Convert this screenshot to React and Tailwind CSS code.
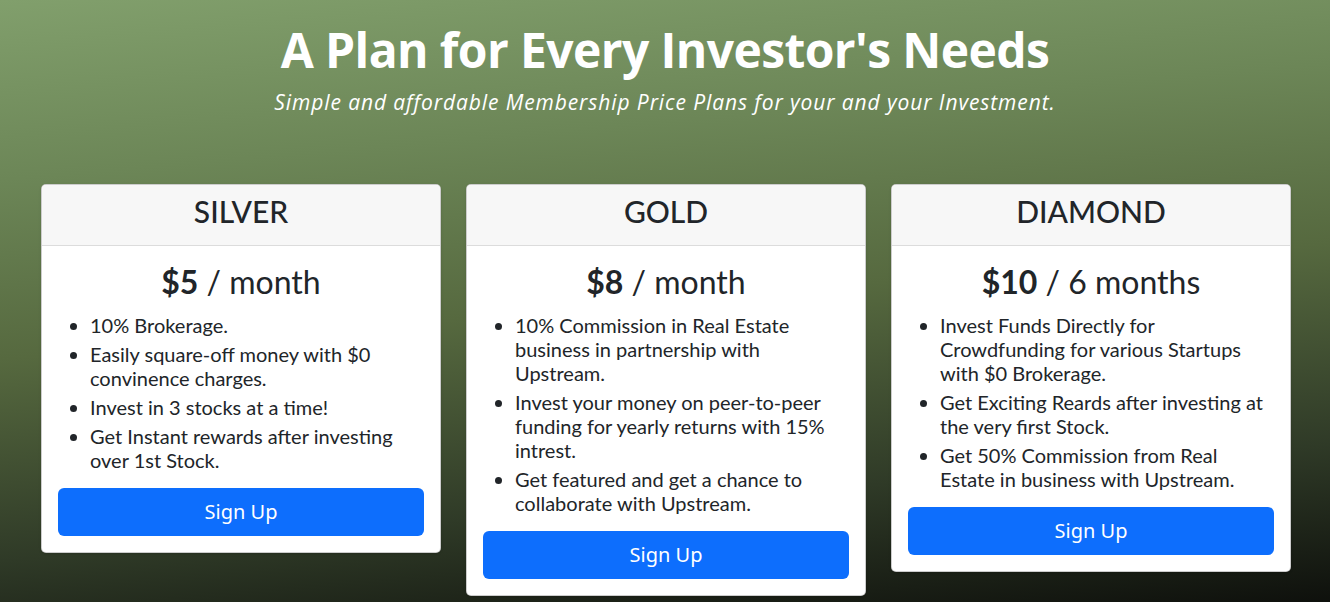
import React from "react";

const plans = [
  {
    name: "SILVER",
    price: "$5",
    period: "month",
    items: [
      "10% Brokerage.",
      "Easily square-off money with $0 convinence charges.",
      "Invest in 3 stocks at a time!",
      "Get Instant rewards after investing over 1st Stock.",
    ],
  },
  {
    name: "GOLD",
    price: "$8",
    period: "month",
    items: [
      "10% Commission in Real Estate business in partnership with Upstream.",
      "Invest your money on peer-to-peer funding for yearly returns with 15% intrest.",
      "Get featured and get a chance to collaborate with Upstream.",
    ],
  },
  {
    name: "DIAMOND",
    price: "$10",
    period: "6 months",
    items: [
      "Invest Funds Directly for Crowdfunding for various Startups with $0 Brokerage.",
      "Get Exciting Reards after investing at the very first Stock.",
      "Get 50% Commission from Real Estate in business with Upstream.",
    ],
  },
];

function Card({ plan }) {
  return (
    <div className="w-[400px] shrink-0 bg-white border border-black/20 rounded-[5px] overflow-hidden shadow-sm text-[#212529] font-['Lato',sans-serif]">
      <div className="bg-[#f7f7f7] border-b border-[#dcdcdc] pt-[9px] pb-[16px] text-center text-[30px] leading-[35px] font-medium">
        {plan.name}
      </div>
      <div className="p-4">
        <div className="text-center text-[32px] leading-[40px] mb-[11px]">
          <span className="font-bold">{plan.price}</span> / {plan.period}
        </div>
        <ul className="list-disc pl-8 mb-[16px] text-[20px] leading-[24px] flex flex-col gap-[5px]">
          {plan.items.map((it, i) => (
            <li key={i}>{it}</li>
          ))}
        </ul>
        <button className="w-full h-[48px] rounded-[6px] bg-[#0d6efd] text-white text-[20px] font-['Noto_Sans',sans-serif]">
          Sign Up
        </button>
      </div>
    </div>
  );
}

export default function App() {
  return (
    <div className="min-h-[602px] w-full bg-[linear-gradient(175deg,#819f6c_0%,#6c8657_25%,#56693f_50%,#2f3a27_78%,#0e100c_100%)] pb-[7px]">
      <div className="text-center text-white pt-[22px]">
        <h1 className="font-['Open_Sans',sans-serif] font-bold text-[48px] leading-[56px] tracking-[-0.6px]">
          A Plan for Every Investor's Needs
        </h1>
        <p className="mt-[10px] font-['Open_Sans',sans-serif] italic text-[21px] leading-[28px] tracking-[0.9px]">
          Simple and affordable Membership Price Plans for your and your Investment.
        </p>
      </div>
      <div className="flex justify-center items-start gap-[25px] mt-[68px] pl-[2px]">
        {plans.map((p) => (
          <Card key={p.name} plan={p} />
        ))}
      </div>
    </div>
  );
}
